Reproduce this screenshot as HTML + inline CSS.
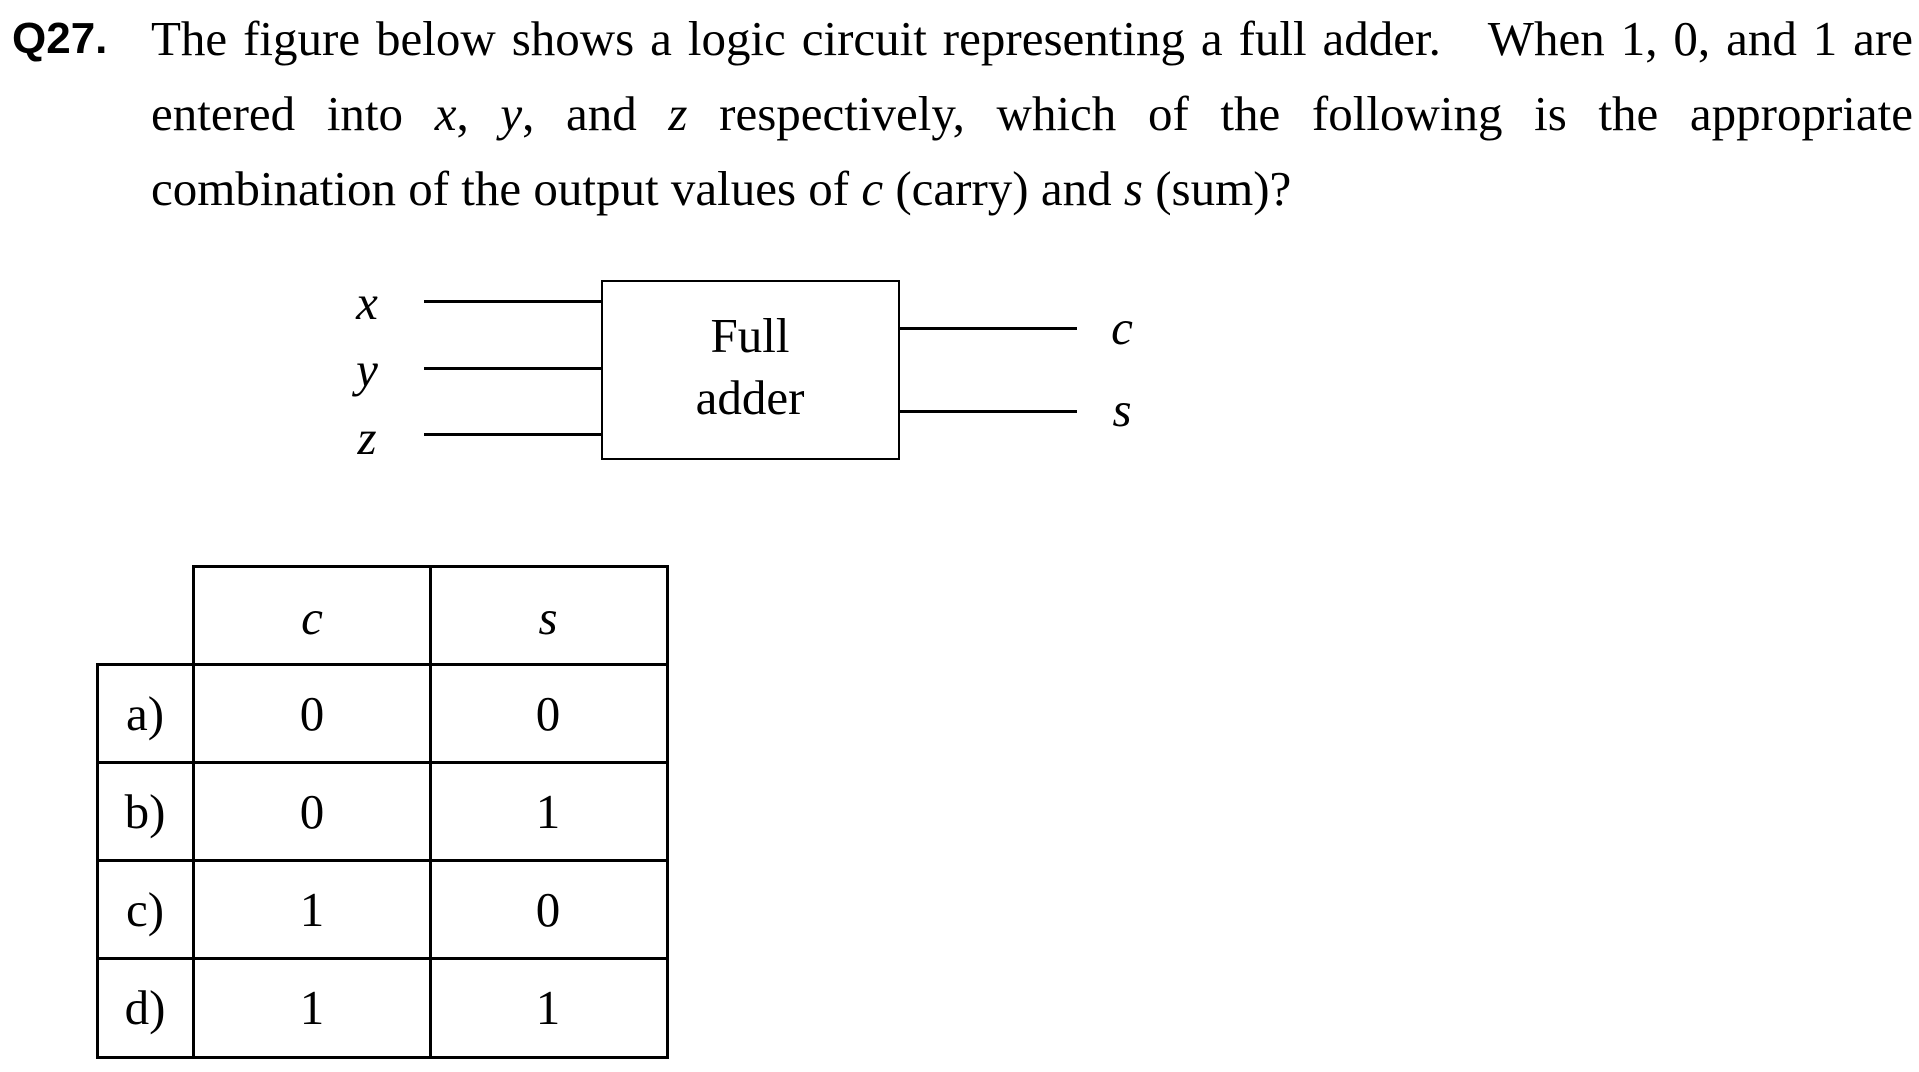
<!DOCTYPE html>
<html><head><style>
body{margin:0;width:1919px;height:1072px;background:#fff;position:relative;font-family:"Liberation Serif",serif;color:#000;overflow:hidden}
.q{position:absolute;left:12px;top:14px;font:bold 44px "Liberation Sans",sans-serif}
.l{position:absolute;left:151px;width:1762px;font-size:49px;line-height:56px;white-space:nowrap}
.j{text-align:justify;text-align-last:justify;white-space:normal}
i{font-style:italic}
.t{position:absolute;font-size:49px;line-height:56px;transform:translate(-50%,-50%)}
.h{position:absolute;background:#000}
</style></head><body>
<div class="q">Q27.</div>
<div class="l j" style="top:11px">The figure below shows a logic circuit representing a full adder.&nbsp;&nbsp; When 1, 0, and 1 are</div>
<div class="l j" style="top:86px">entered into <i>x</i>, <i>y</i>, and <i>z</i> respectively, which of the following is the appropriate</div>
<div class="l" style="top:161px">combination of the output values of <i>c</i> (carry) and <i>s</i> (sum)?</div>

<div class="h" style="left:601px;top:280px;width:299px;height:180px;background:none;border:2px solid #000;box-sizing:border-box"></div>
<div class="h" style="left:424px;top:300px;width:177px;height:3px"></div>
<div class="h" style="left:424px;top:367px;width:177px;height:3px"></div>
<div class="h" style="left:424px;top:433px;width:177px;height:3px"></div>
<div class="h" style="left:899px;top:327px;width:178px;height:3px"></div>
<div class="h" style="left:899px;top:410px;width:178px;height:3px"></div>
<div class="t" style="left:367px;top:303px"><i>x</i></div>
<div class="t" style="left:367px;top:370px"><i>y</i></div>
<div class="t" style="left:367px;top:438px"><i>z</i></div>
<div class="t" style="left:1122px;top:328px"><i>c</i></div>
<div class="t" style="left:1122px;top:410px"><i>s</i></div>
<div class="t" style="left:750px;top:336px">Full</div>
<div class="t" style="left:750px;top:398px">adder</div>

<div class="h" style="left:193px;top:565px;width:476px;height:3px"></div>
<div class="h" style="left:97px;top:663px;width:572px;height:3px"></div>
<div class="h" style="left:97px;top:761px;width:572px;height:3px"></div>
<div class="h" style="left:97px;top:859px;width:572px;height:3px"></div>
<div class="h" style="left:97px;top:957px;width:572px;height:3px"></div>
<div class="h" style="left:97px;top:1056px;width:572px;height:3px"></div>
<div class="h" style="left:96px;top:663px;width:3px;height:396px"></div>
<div class="h" style="left:192px;top:565px;width:3px;height:494px"></div>
<div class="h" style="left:429px;top:565px;width:3px;height:494px"></div>
<div class="h" style="left:666px;top:565px;width:3px;height:494px"></div>
<div class="t" style="left:312px;top:618px"><i>c</i></div>
<div class="t" style="left:548px;top:618px"><i>s</i></div>
<div class="t" style="left:145px;top:714px">a)</div>
<div class="t" style="left:312px;top:714px">0</div>
<div class="t" style="left:548px;top:714px">0</div>
<div class="t" style="left:145px;top:812px">b)</div>
<div class="t" style="left:312px;top:812px">0</div>
<div class="t" style="left:548px;top:812px">1</div>
<div class="t" style="left:145px;top:910px">c)</div>
<div class="t" style="left:312px;top:910px">1</div>
<div class="t" style="left:548px;top:910px">0</div>
<div class="t" style="left:145px;top:1008px">d)</div>
<div class="t" style="left:312px;top:1008px">1</div>
<div class="t" style="left:548px;top:1008px">1</div>
</body></html>
